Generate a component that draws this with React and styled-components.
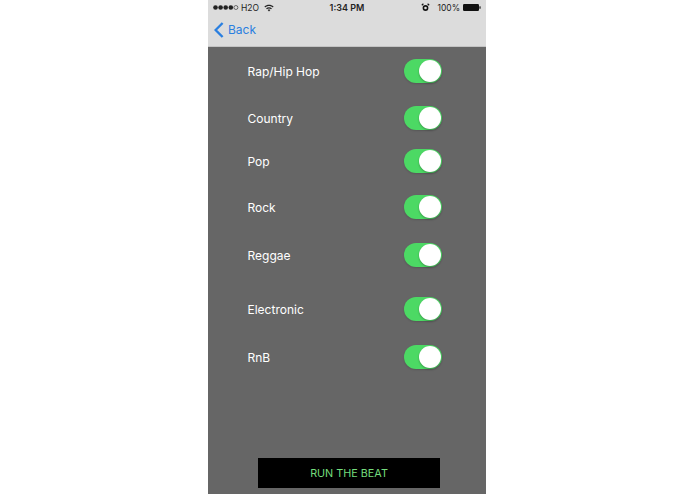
import React from "react";
import styled, { createGlobalStyle } from "styled-components";

const Global = createGlobalStyle`
  html, body { margin: 0; padding: 0; background: #fff; height: 100%; }
  #root { height: 100%; }
  * { box-sizing: border-box; }
`;

const Page = styled.div`
  width: 695px;
  height: 494px;
  display: flex;
  padding-left: 208px;
  overflow: hidden;
  font-family: Inter, "Liberation Sans", Arial, sans-serif;
`;

const Phone = styled.div`
  width: 278px;
  height: 494px;
  display: flex;
  flex-direction: column;
  background: #666666;
`;

const Header = styled.div`
  height: 47px;
  flex: none;
  background: #dcdcdc;
  display: flex;
  flex-direction: column;
  border-bottom: 1px solid #c4c4c4;
`;

const StatusBar = styled.div`
  height: 15px;
  padding: 0 5px 0 5px;
  display: grid;
  grid-template-columns: 1fr auto 1fr;
  align-items: center;
  font-size: 8.5px;
  color: #222;
`;

const StatusLeft = styled.div`
  display: flex;
  align-items: center;
  gap: 2px;
`;

const StatusRight = styled.div`
  display: flex;
  align-items: center;
  justify-content: flex-end;
  gap: 3px;
`;

const Clock = styled.div`
  font-weight: 600;
  font-size: 9px;
`;

const Nav = styled.div`
  flex: 1;
  display: flex;
  align-items: center;
  gap: 4px;
  padding: 0 0 2px 6px;
  color: #2a7fe0;
  font-size: 12px;
`;

const List = styled.div`
  display: flex;
  flex-direction: column;
  padding: 12px 44px 0 39.5px;
`;

const Row = styled.div`
  height: 24px;
  margin-top: ${(p) => p.$gap}px;
  display: flex;
  align-items: center;
  justify-content: space-between;
  color: #fff;
  font-size: 12px;
`;

const Track = styled.div`
  width: 38px;
  height: 24px;
  border-radius: 12px;
  background: #4cd964;
  padding: 1px;
  display: flex;
  justify-content: flex-end;
  box-shadow: 0 1px 2px rgba(0, 0, 0, 0.15);
`;

const Thumb = styled.div`
  width: 22px;
  height: 22px;
  border-radius: 50%;
  background: #fff;
  box-shadow: 0 1px 2px rgba(0, 0, 0, 0.3);
`;

const RunButton = styled.button`
  display: block;
  width: 182px;
  height: 30px;
  margin: auto 0 6px 50px;
  padding: 0;
  border: 0;
  border-radius: 0;
  background: #000;
  color: #74dc7c;
  font-family: inherit;
  font-size: 10.8px;
`;

const Signal = () => (
  <svg width="26" height="5" viewBox="0 0 26 5">
    {[2.5, 7.6, 12.7, 17.8].map((x) => (
      <circle key={x} cx={x} cy="2.5" r="2.3" fill="#222" />
    ))}
    <circle cx="22.9" cy="2.5" r="2" fill="none" stroke="#222" strokeWidth="0.6" />
  </svg>
);

const Wifi = () => (
  <svg width="10" height="8" viewBox="0 0 10 8" style={{ marginLeft: 3 }}>
    <path d="M0.4 2.6C3 0.1 7 0.1 9.6 2.6L8.8 3.5C6.6 1.5 3.4 1.5 1.2 3.5Z" fill="#222" />
    <path d="M2.1 4.3C3.8 2.8 6.2 2.8 7.9 4.3L7.1 5.2C5.8 4.1 4.2 4.1 2.9 5.2Z" fill="#222" />
    <path d="M3.7 5.9C4.5 5.3 5.5 5.3 6.3 5.9L5 7.5Z" fill="#222" />
  </svg>
);

const Alarm = () => (
  <svg width="9" height="9" viewBox="0 0 9 9" style={{ marginRight: 4 }}>
    <circle cx="4.5" cy="5" r="2.9" fill="#111" />
    <circle cx="4.5" cy="5" r="1.3" fill="#dcdcdc" />
    <path d="M0.8 2.2L2.4 0.8M8.2 2.2L6.6 0.8" stroke="#111" strokeWidth="1.2" />
  </svg>
);

const Battery = () => (
  <svg width="18" height="7" viewBox="0 0 18 7">
    <rect x="0" y="0" width="16" height="7" rx="1.2" fill="#111" />
    <rect x="16.4" y="2.2" width="1.2" height="2.6" rx="0.5" fill="#111" />
  </svg>
);

const Chevron = () => (
  <svg width="10" height="16" viewBox="0 0 10 16">
    <path d="M8.6 1L1.6 8L8.6 15" fill="none" stroke="#2a7fe0" strokeWidth="2.4" />
  </svg>
);

const genres = [
  ["Rap/Hip Hop", 0],
  ["Country", 23],
  ["Pop", 19],
  ["Rock", 22],
  ["Reggae", 24],
  ["Electronic", 30],
  ["RnB", 24],
];

export default function App() {
  return (
    <Page>
      <Global />
      <Phone>
        <Header>
          <StatusBar>
            <StatusLeft>
              <Signal />
              <span>H2O</span>
              <Wifi />
            </StatusLeft>
            <Clock>1:34 PM</Clock>
            <StatusRight>
              <Alarm />
              <span>100%</span>
              <Battery />
            </StatusRight>
          </StatusBar>
          <Nav>
            <Chevron />
            <span>Back</span>
          </Nav>
        </Header>
        <List>
          {genres.map(([name, gap]) => (
            <Row key={name} $gap={gap}>
              <span>{name}</span>
              <Track>
                <Thumb />
              </Track>
            </Row>
          ))}
        </List>
        <RunButton>RUN THE BEAT</RunButton>
      </Phone>
    </Page>
  );
}
